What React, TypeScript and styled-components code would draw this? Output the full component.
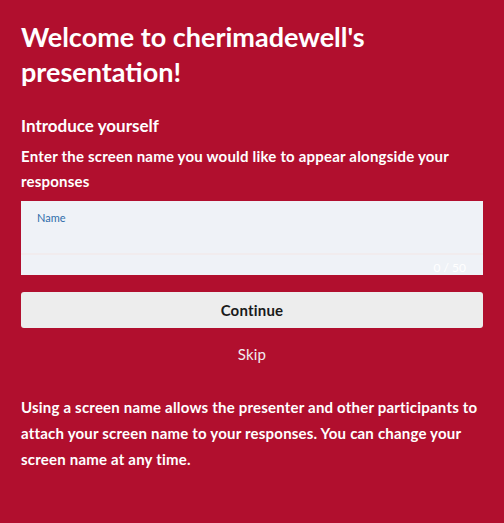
import React from 'react';
import styled, { createGlobalStyle } from 'styled-components';

const GlobalStyle = createGlobalStyle`
  html, body {
    margin: 0;
    padding: 0;
    background-color: #B10F2E;
  }
  body {
    font-family: Lato, "Open Sans", "Liberation Sans", sans-serif;
    color: #fff;
  }
`;

const Page = styled.div`
  min-height: 523px;
  padding: 19px 21px 20px 21px;
  box-sizing: border-box;
  background-color: #B10F2E;
  display: flex;
  flex-direction: column;
`;

const Heading = styled.h1`
  font-size: 27px;
  font-weight: 700;
  line-height: 35px;
  margin: 0 0 25px 0;
`;

const SubHeading = styled.h2`
  font-size: 17px;
  font-weight: 700;
  line-height: 24px;
  margin: 0 0 6px 0;
`;

const Prompt = styled.p`
  font-size: 15px;
  font-weight: 700;
  line-height: 25px;
  letter-spacing: 0.2px;
  margin: 0 0 7px 0;
`;

const Field = styled.div`
  background-color: #EFF2F7;
  height: 74px;
  display: flex;
  flex-direction: column;
`;

const FieldTop = styled.div`
  height: 54px;
  padding: 10px 16px 0 16px;
  box-sizing: border-box;
  border-bottom: 2px solid #F1ECEE;
  display: flex;
  flex-direction: column;
`;

const FieldLabel = styled.label`
  font-size: 11px;
  color: #2E6DAA;
  line-height: 14px;
`;

const FieldInput = styled.input`
  border: none;
  background: transparent;
  outline: none;
  font: inherit;
  font-size: 15px;
  padding: 4px 0 0 0;
`;

const Counter = styled.div`
  flex: 1;
  display: flex;
  align-items: flex-end;
  justify-content: flex-end;
  padding: 0 17px 0 0;
  font-size: 12px;
  line-height: 14px;
  color: #fff;
`;

const ContinueButton = styled.button`
  margin-top: 17px;
  height: 36px;
  width: 100%;
  border: none;
  border-radius: 3px;
  background-color: #EDEDED;
  color: #1a1a1a;
  font-family: inherit;
  font-size: 15px;
  font-weight: 700;
  letter-spacing: 0.2px;
  cursor: pointer;
`;

const SkipButton = styled.button`
  margin-top: 16px;
  align-self: center;
  background: none;
  border: none;
  color: #F2ECEE;
  font-family: inherit;
  font-size: 15px;
  letter-spacing: 0.2px;
  cursor: pointer;
  padding: 0;
  line-height: 20px;
`;

const Footnote = styled.p`
  font-size: 15px;
  font-weight: 700;
  line-height: 26px;
  letter-spacing: 0.2px;
  margin: 30px 0 0 0;
`;

const App: React.FC = () => {
  return (
    <>
      <GlobalStyle />
      <Page>
        <Heading>Welcome to cherimadewell's presentation!</Heading>
        <SubHeading>Introduce yourself</SubHeading>
        <Prompt>Enter the screen name you would like to appear alongside your responses</Prompt>
        <Field>
          <FieldTop>
            <FieldLabel htmlFor="name">Name</FieldLabel>
            <FieldInput id="name" maxLength={50} />
          </FieldTop>
          <Counter>0 / 50</Counter>
        </Field>
        <ContinueButton>Continue</ContinueButton>
        <SkipButton>Skip</SkipButton>
        <Footnote>
          Using a screen name allows the presenter and other participants to attach your screen name to your
          responses. You can change your screen name at any time.
        </Footnote>
      </Page>
    </>
  );
};

export default App;
